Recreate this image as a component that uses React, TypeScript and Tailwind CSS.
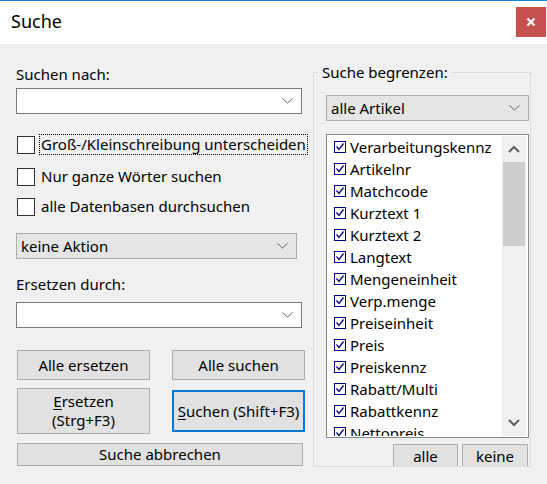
import React from 'react';

const fields = [
  'Verarbeitungskennz',
  'Artikelnr',
  'Matchcode',
  'Kurztext 1',
  'Kurztext 2',
  'Langtext',
  'Mengeneinheit',
  'Verp.menge',
  'Preiseinheit',
  'Preis',
  'Preiskennz',
  'Rabatt/Multi',
  'Rabattkennz',
  'Nettopreis',
];

function Chevron() {
  return (
    <svg width="11" height="6" viewBox="0 0 11 6" className="shrink-0">
      <path d="M0.5 0.5 L5.5 5 L10.5 0.5" fill="none" stroke="#606060" strokeWidth="1" />
    </svg>
  );
}

function Combo({ value, gray, className }: { value?: string; gray?: boolean; className: string }) {
  return (
    <div
      className={`flex items-center justify-between h-[26px] pl-[4px] pr-[8px] border ${
        gray ? 'bg-[#e5e5e5] border-[#adadad]' : 'bg-white border-[#7a7a7a]'
      } ${className}`}
    >
      <span>{value}</span>
      <Chevron />
    </div>
  );
}

function CheckRow({ label, focused, className }: { label: string; focused?: boolean; className: string }) {
  return (
    <div className={`flex items-center h-[21px] ${className}`}>
      <div className="w-[18px] h-[18px] ml-px shrink-0 bg-white border border-[#333333]" />
      <span
        className={`ml-[4px] h-[21px] leading-[19px] px-px whitespace-nowrap border border-dotted ${
          focused ? 'border-black' : 'border-transparent'
        }`}
      >
        {label}
      </span>
    </div>
  );
}

function ListCheck() {
  return (
    <svg width="12" height="12" viewBox="0 0 12 12" className="shrink-0">
      <rect x="0.5" y="0.5" width="11" height="11" fill="none" stroke="#000080" strokeWidth="1" />
      <path d="M2.5 5.5 L5 8.5 L9.5 2.5" fill="none" stroke="#000080" strokeWidth="1.3" />
    </svg>
  );
}

export default function App() {
  return (
    <div
      className="w-[547px] h-[484px] bg-[#f0f0f0] border-t border-[#1883d7] overflow-hidden text-[15px] text-black"
      style={{ fontFamily: '"Noto Sans", sans-serif' }}
    >
      {/* Title bar */}
      <div className="h-[43px] bg-white flex items-center justify-between">
        <span className="ml-[11px] text-[18px] mt-[-2px]">Suche</span>
        <div className="w-[30px] h-[30px] mr-px mt-[-2px] bg-[#c75050] flex items-center justify-center">
          <svg width="10" height="10" viewBox="0 0 10 10">
            <path d="M1.5 1.5 L8.5 8.5 M8.5 1.5 L1.5 8.5" stroke="white" strokeWidth="2.2" />
          </svg>
        </div>
      </div>

      {/* Body */}
      <div className="flex pl-[16px]">
        {/* Left column */}
        <div className="w-[289px] flex flex-col pt-[20px]">
          <div className="h-[20px] leading-[20px]">Suchen nach:</div>
          <Combo className="mt-[4px] w-[286px]" />

          <CheckRow className="mt-[20px]" label="Groß-/Kleinschreibung unterscheiden" focused />
          <CheckRow className="mt-[11px]" label="Nur ganze Wörter suchen" />
          <CheckRow className="mt-[9px]" label="alle Datenbasen durchsuchen" />

          <Combo className="mt-[16px] w-[281px]" value="keine Aktion" gray />

          <div className="mt-[15px] h-[20px] leading-[20px]">Ersetzen durch:</div>
          <Combo className="mt-[8px] w-[286px]" />

          <div className="mt-[22px] flex gap-[22px] ml-px">
            <button className="w-[133px] h-[30px] bg-[#e1e1e1] border border-[#adadad]">Alle ersetzen</button>
            <button className="w-[133px] h-[30px] bg-[#e1e1e1] border border-[#adadad]">Alle suchen</button>
          </div>
          <div className="mt-[8px] flex items-center gap-[22px] ml-px">
            <button className="w-[133px] h-[46px] bg-[#e1e1e1] border border-[#adadad] leading-[19px]">
              <span className="underline underline-offset-2">E</span>rsetzen
              <br />
              (Strg+F3)
            </button>
            <button className="w-[133px] h-[42px] bg-[#e1e1e1] border-2 border-[#0078d7] whitespace-nowrap">
              <span className="underline underline-offset-2">S</span>uchen (Shift+F3)
            </button>
          </div>
          <button className="mt-[9px] ml-px w-[286px] h-[23px] bg-[#e1e1e1] border border-[#adadad] leading-[19px]">
            Suche abbrechen
          </button>
        </div>

        {/* Right column */}
        <div className="ml-[8px] pt-[18px]">
          <fieldset className="w-[218px] h-[405px] border border-[#dcdcdc] pl-[12px] pr-[1px]">
            <legend className="ml-[-7px] px-[3px] h-[20px] leading-[20px]">Suche begrenzen:</legend>
            <Combo className="mt-[13px] w-[203px]" value="alle Artikel" gray />

            <div className="mt-[13px] w-[203px] h-[304px] bg-white border border-[#828790] flex p-px overflow-hidden">
              <div className="flex-1 flex flex-col pl-[6px] overflow-hidden">
                {fields.map((f) => (
                  <div key={f} className="h-[22px] shrink-0 flex items-center gap-[4px] whitespace-nowrap">
                    <ListCheck />
                    <span className="leading-[22px]">{f}</span>
                  </div>
                ))}
              </div>
              <div className="w-[24px] mr-px bg-[#f0f0f0] flex flex-col">
                <div className="h-[26px] flex items-center justify-center">
                  <svg width="12" height="8" viewBox="0 0 12 8">
                    <path d="M1 7 L6 2 L11 7" fill="none" stroke="#606060" strokeWidth="2" />
                  </svg>
                </div>
                <div className="h-[84px] mx-px bg-[#cdcdcd]" />
                <div className="flex-1" />
                <div className="h-[26px] flex items-center justify-center">
                  <svg width="12" height="8" viewBox="0 0 12 8">
                    <path d="M1 1 L6 6 L11 1" fill="none" stroke="#606060" strokeWidth="2" />
                  </svg>
                </div>
              </div>
            </div>

            <div className="mt-[6px] flex justify-end gap-[4px] pr-[1px]">
              <button className="w-[65px] h-[22px] bg-[#e1e1e1] border border-b-0 border-[#adadad] leading-[20px]">alle</button>
              <button className="w-[66px] h-[22px] bg-[#e1e1e1] border border-b-0 border-[#adadad] leading-[20px]">keine</button>
            </div>
          </fieldset>
        </div>
      </div>
    </div>
  );
}
